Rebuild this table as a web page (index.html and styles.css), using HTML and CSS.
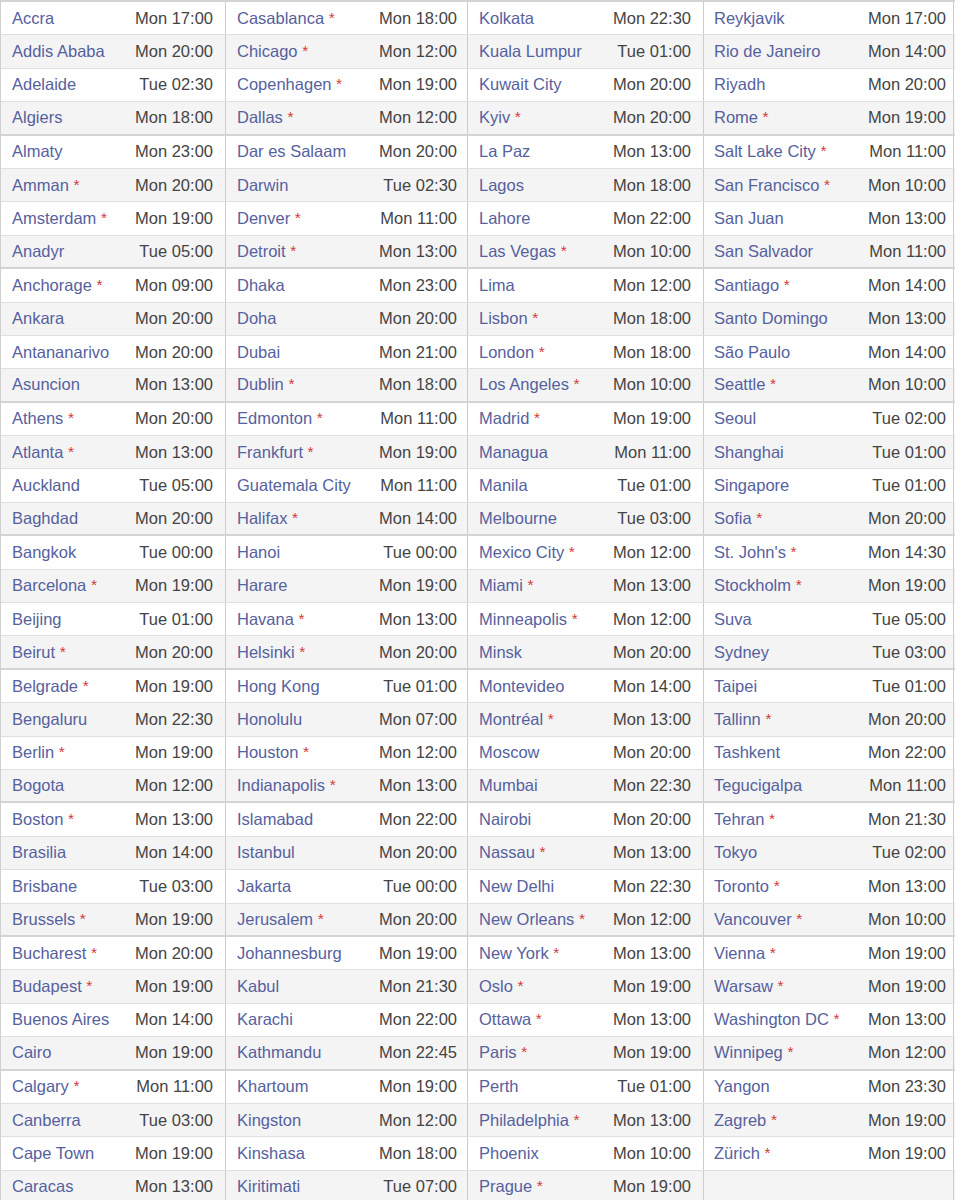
FILE: index.html
```html
<!DOCTYPE html>
<html lang="en">
<head>
<meta charset="utf-8">
<title>World Clock</title>
<link rel="stylesheet" href="styles.css">
</head>
<body>
<div class="clock">
<div class="row"><div class="cell"><a class="city">Accra</a><span class="time">Mon 17:00</span></div><div class="cell"><a class="city">Casablanca <i>*</i></a><span class="time">Mon 18:00</span></div><div class="cell"><a class="city">Kolkata</a><span class="time">Mon 22:30</span></div><div class="cell"><a class="city">Reykjavik</a><span class="time">Mon 17:00</span></div></div>
<div class="row"><div class="cell"><a class="city">Addis Ababa</a><span class="time">Mon 20:00</span></div><div class="cell"><a class="city">Chicago <i>*</i></a><span class="time">Mon 12:00</span></div><div class="cell"><a class="city">Kuala Lumpur</a><span class="time">Tue 01:00</span></div><div class="cell"><a class="city">Rio de Janeiro</a><span class="time">Mon 14:00</span></div></div>
<div class="row"><div class="cell"><a class="city">Adelaide</a><span class="time">Tue 02:30</span></div><div class="cell"><a class="city">Copenhagen <i>*</i></a><span class="time">Mon 19:00</span></div><div class="cell"><a class="city">Kuwait City</a><span class="time">Mon 20:00</span></div><div class="cell"><a class="city">Riyadh</a><span class="time">Mon 20:00</span></div></div>
<div class="row"><div class="cell"><a class="city">Algiers</a><span class="time">Mon 18:00</span></div><div class="cell"><a class="city">Dallas <i>*</i></a><span class="time">Mon 12:00</span></div><div class="cell"><a class="city">Kyiv <i>*</i></a><span class="time">Mon 20:00</span></div><div class="cell"><a class="city">Rome <i>*</i></a><span class="time">Mon 19:00</span></div></div>
<div class="row"><div class="cell"><a class="city">Almaty</a><span class="time">Mon 23:00</span></div><div class="cell"><a class="city">Dar es Salaam</a><span class="time">Mon 20:00</span></div><div class="cell"><a class="city">La Paz</a><span class="time">Mon 13:00</span></div><div class="cell"><a class="city">Salt Lake City <i>*</i></a><span class="time">Mon 11:00</span></div></div>
<div class="row"><div class="cell"><a class="city">Amman <i>*</i></a><span class="time">Mon 20:00</span></div><div class="cell"><a class="city">Darwin</a><span class="time">Tue 02:30</span></div><div class="cell"><a class="city">Lagos</a><span class="time">Mon 18:00</span></div><div class="cell"><a class="city">San Francisco <i>*</i></a><span class="time">Mon 10:00</span></div></div>
<div class="row"><div class="cell"><a class="city">Amsterdam <i>*</i></a><span class="time">Mon 19:00</span></div><div class="cell"><a class="city">Denver <i>*</i></a><span class="time">Mon 11:00</span></div><div class="cell"><a class="city">Lahore</a><span class="time">Mon 22:00</span></div><div class="cell"><a class="city">San Juan</a><span class="time">Mon 13:00</span></div></div>
<div class="row"><div class="cell"><a class="city">Anadyr</a><span class="time">Tue 05:00</span></div><div class="cell"><a class="city">Detroit <i>*</i></a><span class="time">Mon 13:00</span></div><div class="cell"><a class="city">Las Vegas <i>*</i></a><span class="time">Mon 10:00</span></div><div class="cell"><a class="city">San Salvador</a><span class="time">Mon 11:00</span></div></div>
<div class="row"><div class="cell"><a class="city">Anchorage <i>*</i></a><span class="time">Mon 09:00</span></div><div class="cell"><a class="city">Dhaka</a><span class="time">Mon 23:00</span></div><div class="cell"><a class="city">Lima</a><span class="time">Mon 12:00</span></div><div class="cell"><a class="city">Santiago <i>*</i></a><span class="time">Mon 14:00</span></div></div>
<div class="row"><div class="cell"><a class="city">Ankara</a><span class="time">Mon 20:00</span></div><div class="cell"><a class="city">Doha</a><span class="time">Mon 20:00</span></div><div class="cell"><a class="city">Lisbon <i>*</i></a><span class="time">Mon 18:00</span></div><div class="cell"><a class="city">Santo Domingo</a><span class="time">Mon 13:00</span></div></div>
<div class="row"><div class="cell"><a class="city">Antananarivo</a><span class="time">Mon 20:00</span></div><div class="cell"><a class="city">Dubai</a><span class="time">Mon 21:00</span></div><div class="cell"><a class="city">London <i>*</i></a><span class="time">Mon 18:00</span></div><div class="cell"><a class="city">São Paulo</a><span class="time">Mon 14:00</span></div></div>
<div class="row"><div class="cell"><a class="city">Asuncion</a><span class="time">Mon 13:00</span></div><div class="cell"><a class="city">Dublin <i>*</i></a><span class="time">Mon 18:00</span></div><div class="cell"><a class="city">Los Angeles <i>*</i></a><span class="time">Mon 10:00</span></div><div class="cell"><a class="city">Seattle <i>*</i></a><span class="time">Mon 10:00</span></div></div>
<div class="row"><div class="cell"><a class="city">Athens <i>*</i></a><span class="time">Mon 20:00</span></div><div class="cell"><a class="city">Edmonton <i>*</i></a><span class="time">Mon 11:00</span></div><div class="cell"><a class="city">Madrid <i>*</i></a><span class="time">Mon 19:00</span></div><div class="cell"><a class="city">Seoul</a><span class="time">Tue 02:00</span></div></div>
<div class="row"><div class="cell"><a class="city">Atlanta <i>*</i></a><span class="time">Mon 13:00</span></div><div class="cell"><a class="city">Frankfurt <i>*</i></a><span class="time">Mon 19:00</span></div><div class="cell"><a class="city">Managua</a><span class="time">Mon 11:00</span></div><div class="cell"><a class="city">Shanghai</a><span class="time">Tue 01:00</span></div></div>
<div class="row"><div class="cell"><a class="city">Auckland</a><span class="time">Tue 05:00</span></div><div class="cell"><a class="city">Guatemala City</a><span class="time">Mon 11:00</span></div><div class="cell"><a class="city">Manila</a><span class="time">Tue 01:00</span></div><div class="cell"><a class="city">Singapore</a><span class="time">Tue 01:00</span></div></div>
<div class="row"><div class="cell"><a class="city">Baghdad</a><span class="time">Mon 20:00</span></div><div class="cell"><a class="city">Halifax <i>*</i></a><span class="time">Mon 14:00</span></div><div class="cell"><a class="city">Melbourne</a><span class="time">Tue 03:00</span></div><div class="cell"><a class="city">Sofia <i>*</i></a><span class="time">Mon 20:00</span></div></div>
<div class="row"><div class="cell"><a class="city">Bangkok</a><span class="time">Tue 00:00</span></div><div class="cell"><a class="city">Hanoi</a><span class="time">Tue 00:00</span></div><div class="cell"><a class="city">Mexico City <i>*</i></a><span class="time">Mon 12:00</span></div><div class="cell"><a class="city">St. John's <i>*</i></a><span class="time">Mon 14:30</span></div></div>
<div class="row"><div class="cell"><a class="city">Barcelona <i>*</i></a><span class="time">Mon 19:00</span></div><div class="cell"><a class="city">Harare</a><span class="time">Mon 19:00</span></div><div class="cell"><a class="city">Miami <i>*</i></a><span class="time">Mon 13:00</span></div><div class="cell"><a class="city">Stockholm <i>*</i></a><span class="time">Mon 19:00</span></div></div>
<div class="row"><div class="cell"><a class="city">Beijing</a><span class="time">Tue 01:00</span></div><div class="cell"><a class="city">Havana <i>*</i></a><span class="time">Mon 13:00</span></div><div class="cell"><a class="city">Minneapolis <i>*</i></a><span class="time">Mon 12:00</span></div><div class="cell"><a class="city">Suva</a><span class="time">Tue 05:00</span></div></div>
<div class="row"><div class="cell"><a class="city">Beirut <i>*</i></a><span class="time">Mon 20:00</span></div><div class="cell"><a class="city">Helsinki <i>*</i></a><span class="time">Mon 20:00</span></div><div class="cell"><a class="city">Minsk</a><span class="time">Mon 20:00</span></div><div class="cell"><a class="city">Sydney</a><span class="time">Tue 03:00</span></div></div>
<div class="row"><div class="cell"><a class="city">Belgrade <i>*</i></a><span class="time">Mon 19:00</span></div><div class="cell"><a class="city">Hong Kong</a><span class="time">Tue 01:00</span></div><div class="cell"><a class="city">Montevideo</a><span class="time">Mon 14:00</span></div><div class="cell"><a class="city">Taipei</a><span class="time">Tue 01:00</span></div></div>
<div class="row"><div class="cell"><a class="city">Bengaluru</a><span class="time">Mon 22:30</span></div><div class="cell"><a class="city">Honolulu</a><span class="time">Mon 07:00</span></div><div class="cell"><a class="city">Montréal <i>*</i></a><span class="time">Mon 13:00</span></div><div class="cell"><a class="city">Tallinn <i>*</i></a><span class="time">Mon 20:00</span></div></div>
<div class="row"><div class="cell"><a class="city">Berlin <i>*</i></a><span class="time">Mon 19:00</span></div><div class="cell"><a class="city">Houston <i>*</i></a><span class="time">Mon 12:00</span></div><div class="cell"><a class="city">Moscow</a><span class="time">Mon 20:00</span></div><div class="cell"><a class="city">Tashkent</a><span class="time">Mon 22:00</span></div></div>
<div class="row"><div class="cell"><a class="city">Bogota</a><span class="time">Mon 12:00</span></div><div class="cell"><a class="city">Indianapolis <i>*</i></a><span class="time">Mon 13:00</span></div><div class="cell"><a class="city">Mumbai</a><span class="time">Mon 22:30</span></div><div class="cell"><a class="city">Tegucigalpa</a><span class="time">Mon 11:00</span></div></div>
<div class="row"><div class="cell"><a class="city">Boston <i>*</i></a><span class="time">Mon 13:00</span></div><div class="cell"><a class="city">Islamabad</a><span class="time">Mon 22:00</span></div><div class="cell"><a class="city">Nairobi</a><span class="time">Mon 20:00</span></div><div class="cell"><a class="city">Tehran <i>*</i></a><span class="time">Mon 21:30</span></div></div>
<div class="row"><div class="cell"><a class="city">Brasilia</a><span class="time">Mon 14:00</span></div><div class="cell"><a class="city">Istanbul</a><span class="time">Mon 20:00</span></div><div class="cell"><a class="city">Nassau <i>*</i></a><span class="time">Mon 13:00</span></div><div class="cell"><a class="city">Tokyo</a><span class="time">Tue 02:00</span></div></div>
<div class="row"><div class="cell"><a class="city">Brisbane</a><span class="time">Tue 03:00</span></div><div class="cell"><a class="city">Jakarta</a><span class="time">Tue 00:00</span></div><div class="cell"><a class="city">New Delhi</a><span class="time">Mon 22:30</span></div><div class="cell"><a class="city">Toronto <i>*</i></a><span class="time">Mon 13:00</span></div></div>
<div class="row"><div class="cell"><a class="city">Brussels <i>*</i></a><span class="time">Mon 19:00</span></div><div class="cell"><a class="city">Jerusalem <i>*</i></a><span class="time">Mon 20:00</span></div><div class="cell"><a class="city">New Orleans <i>*</i></a><span class="time">Mon 12:00</span></div><div class="cell"><a class="city">Vancouver <i>*</i></a><span class="time">Mon 10:00</span></div></div>
<div class="row"><div class="cell"><a class="city">Bucharest <i>*</i></a><span class="time">Mon 20:00</span></div><div class="cell"><a class="city">Johannesburg</a><span class="time">Mon 19:00</span></div><div class="cell"><a class="city">New York <i>*</i></a><span class="time">Mon 13:00</span></div><div class="cell"><a class="city">Vienna <i>*</i></a><span class="time">Mon 19:00</span></div></div>
<div class="row"><div class="cell"><a class="city">Budapest <i>*</i></a><span class="time">Mon 19:00</span></div><div class="cell"><a class="city">Kabul</a><span class="time">Mon 21:30</span></div><div class="cell"><a class="city">Oslo <i>*</i></a><span class="time">Mon 19:00</span></div><div class="cell"><a class="city">Warsaw <i>*</i></a><span class="time">Mon 19:00</span></div></div>
<div class="row"><div class="cell"><a class="city">Buenos Aires</a><span class="time">Mon 14:00</span></div><div class="cell"><a class="city">Karachi</a><span class="time">Mon 22:00</span></div><div class="cell"><a class="city">Ottawa <i>*</i></a><span class="time">Mon 13:00</span></div><div class="cell"><a class="city">Washington DC <i>*</i></a><span class="time">Mon 13:00</span></div></div>
<div class="row"><div class="cell"><a class="city">Cairo</a><span class="time">Mon 19:00</span></div><div class="cell"><a class="city">Kathmandu</a><span class="time">Mon 22:45</span></div><div class="cell"><a class="city">Paris <i>*</i></a><span class="time">Mon 19:00</span></div><div class="cell"><a class="city">Winnipeg <i>*</i></a><span class="time">Mon 12:00</span></div></div>
<div class="row"><div class="cell"><a class="city">Calgary <i>*</i></a><span class="time">Mon 11:00</span></div><div class="cell"><a class="city">Khartoum</a><span class="time">Mon 19:00</span></div><div class="cell"><a class="city">Perth</a><span class="time">Tue 01:00</span></div><div class="cell"><a class="city">Yangon</a><span class="time">Mon 23:30</span></div></div>
<div class="row"><div class="cell"><a class="city">Canberra</a><span class="time">Tue 03:00</span></div><div class="cell"><a class="city">Kingston</a><span class="time">Mon 12:00</span></div><div class="cell"><a class="city">Philadelphia <i>*</i></a><span class="time">Mon 13:00</span></div><div class="cell"><a class="city">Zagreb <i>*</i></a><span class="time">Mon 19:00</span></div></div>
<div class="row"><div class="cell"><a class="city">Cape Town</a><span class="time">Mon 19:00</span></div><div class="cell"><a class="city">Kinshasa</a><span class="time">Mon 18:00</span></div><div class="cell"><a class="city">Phoenix</a><span class="time">Mon 10:00</span></div><div class="cell"><a class="city">Zürich <i>*</i></a><span class="time">Mon 19:00</span></div></div>
<div class="row"><div class="cell"><a class="city">Caracas</a><span class="time">Mon 13:00</span></div><div class="cell"><a class="city">Kiritimati</a><span class="time">Tue 07:00</span></div><div class="cell"><a class="city">Prague <i>*</i></a><span class="time">Mon 19:00</span></div><div class="cell"></div></div>
</div>
</body>
</html>
```

FILE: styles.css
```css
html, body {
  margin: 0;
  padding: 0;
  background: #ffffff;
}

body {
  font-family: "Liberation Sans", Arial, sans-serif;
  font-size: 16.5px;
  color: #444444;
}

.clock {
  width: 954px;
  border-top: 2px solid #d4d4d4;
  border-left: 1px solid #d0d0d0;
}

.row {
  display: grid;
  grid-template-columns: 225px 242px 236px 250px;
  height: 33.4px;
  box-sizing: border-box;
  border-bottom: 1px solid #e0e0e0;
  background: #ffffff;
}

.row:nth-child(even) {
  background: #f4f4f4;
}

.row:nth-child(4n) {
  border-bottom: 2px solid #d4d4d4;
}

.cell {
  display: flex;
  align-items: center;
  justify-content: space-between;
  border-right: 1px solid #cccccc;
  white-space: nowrap;
  min-width: 0;
}

.cell:nth-child(1) { padding: 0 12px 0 11px; }
.cell:nth-child(2) { padding: 0 10px 0 11px; }
.cell:nth-child(3) { padding: 0 12px 0 11px; }
.cell:nth-child(4) { padding: 0 7px 0 10px; }

.city {
  color: #56619e;
  text-decoration: none;
}

.city i {
  font-style: normal;
  color: #d23a3a;
  font-size: 15.5px;
  position: relative;
  top: -1px;
}

.time {
  color: #444444;
}
```
